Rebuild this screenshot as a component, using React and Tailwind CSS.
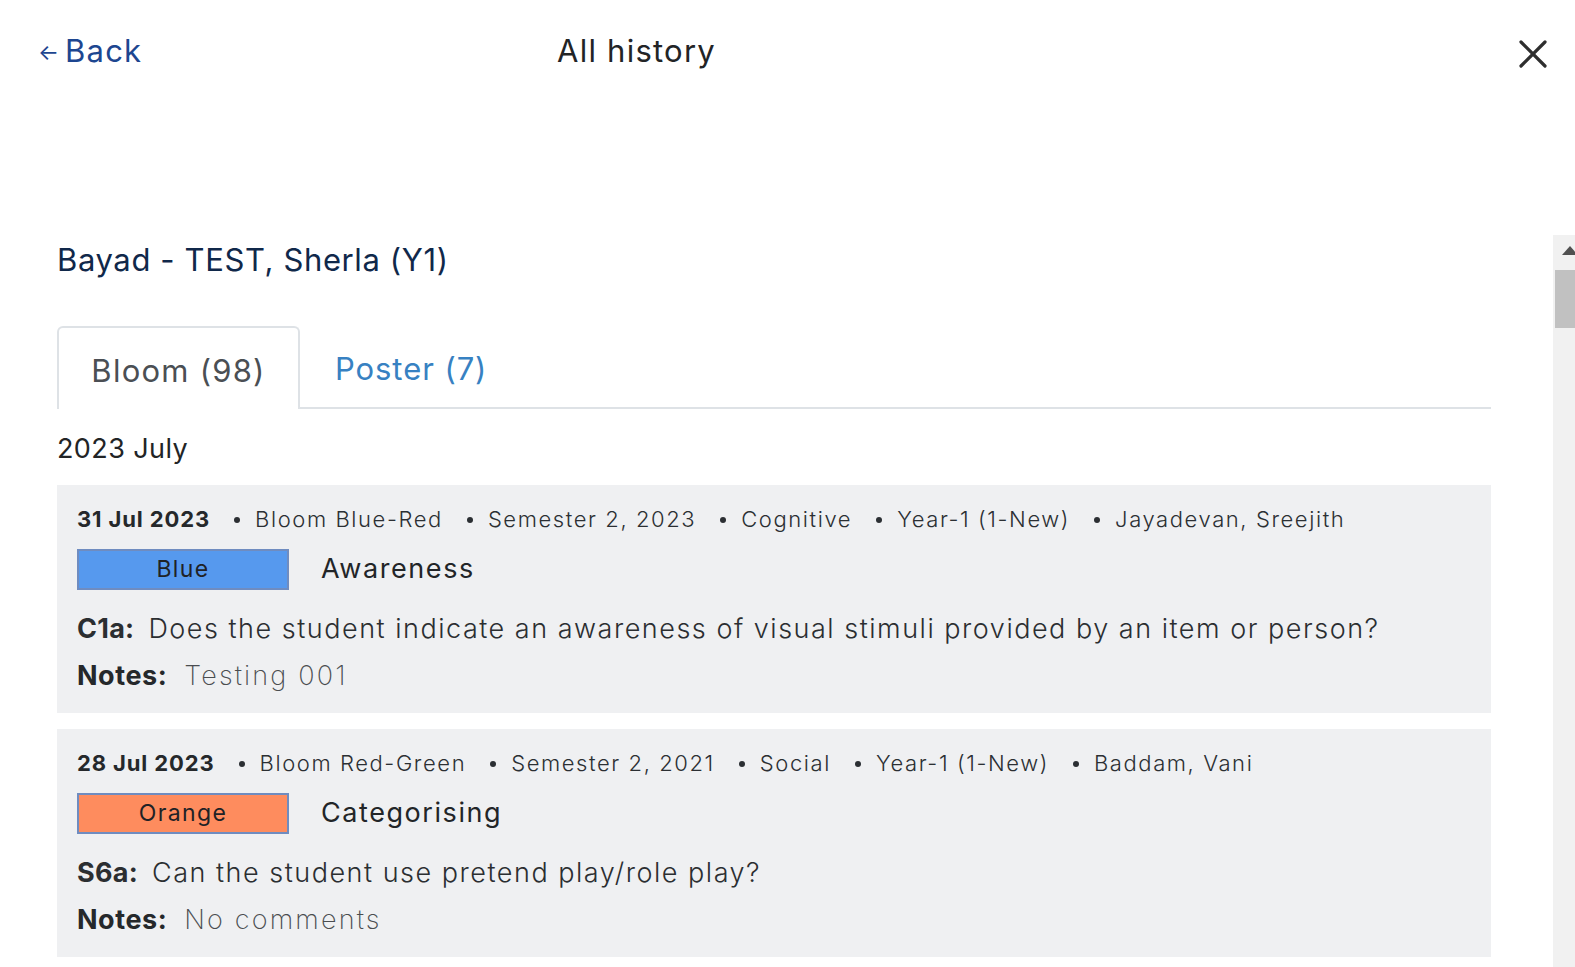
import React from "react";

const cards = [
  {
    date: "31 Jul 2023",
    meta: ["Bloom Blue-Red", "Semester 2, 2023", "Cognitive", "Year-1 (1-New)", "Jayadevan, Sreejith"],
    badge: "Blue",
    badgeClass: "bg-[#5699ee]",
    title: "Awareness",
    code: "C1a:",
    question: "Does the student indicate an awareness of visual stimuli provided by an item or person?",
    notes: "Testing 001",
  },
  {
    date: "28 Jul 2023",
    meta: ["Bloom Red-Green", "Semester 2, 2021", "Social", "Year-1 (1-New)", "Baddam, Vani"],
    badge: "Orange",
    badgeClass: "bg-[#fe8c5e]",
    title: "Categorising",
    code: "S6a:",
    question: "Can the student use pretend play/role play?",
    notes: "No comments",
  },
];

function Card({ c }) {
  return (
    <div className="bg-[#eff0f2] pl-[20px] pr-[20px] pt-[20px] pb-[21px]">
      <div className="flex items-center h-[28px] text-[22px] leading-[28px] text-[#2b2f33] whitespace-nowrap">
        <span className="font-bold text-[#25282b] tracking-[0.04em]">{c.date}</span>
        {c.meta.map((m, i) => (
          <React.Fragment key={i}>
            <span className="ml-[24px] mr-[15px] w-[6px] h-[6px] rounded-full bg-[#2b2f33] mt-[2px]" />
            <span className="font-light tracking-[0.072em]">{m}</span>
          </React.Fragment>
        ))}
      </div>
      <div className="flex items-center mt-[16px] h-[41px]">
        <div className={`w-[212px] h-[41px] ${c.badgeClass} border-2 border-[#6f8cc0] flex items-center justify-center text-[23px] tracking-[0.06em] text-[#1f2226]`}>
          {c.badge}
        </div>
        <div className="ml-[32px] text-[27px] tracking-[0.058em] text-[#222528]">{c.title}</div>
      </div>
      <div className="mt-[23px] h-[32px] flex items-center text-[27px] leading-[32px] text-[#2b2e31] whitespace-nowrap">
        <span className="font-bold tracking-[0.01em]">{c.code}</span>
        <span className="ml-[14px] font-light tracking-[0.056em]">{c.question}</span>
      </div>
      <div className="mt-[15px] h-[32px] flex items-center text-[27px] leading-[32px] whitespace-nowrap">
        <span className="font-bold text-[#25282b] tracking-[0.02em]">Notes:</span>
        <span className="ml-[17px] font-extralight text-[#4a4d50] tracking-[0.08em]">{c.notes}</span>
      </div>
    </div>
  );
}

export default function App() {
  return (
    <div className="w-[1575px] h-[967px] bg-white overflow-hidden flex flex-col font-[Inter,sans-serif]">
      {/* Header */}
      <div className="h-[235px] flex items-start">
        <div className="flex items-center h-[42px] mt-[30px] w-full">
          <div className="w-[557px] pl-[38px] flex items-center text-[#1d4690]">
            <span className="text-[22px] leading-none mr-[6px] mt-[2px]">←</span>
            <span className="text-[31px] leading-[42px] tracking-[0.04em]">Back</span>
          </div>
          <div className="text-[31px] leading-[42px] text-[#222426] tracking-[0.04em]">All history</div>
          <div className="ml-auto mr-[28px] mt-[6px] w-[28px] h-[28px]">
            <svg width="28" height="28" viewBox="0 0 28 28">
              <path d="M2 2 L26 26 M26 2 L2 26" stroke="#2e2e2e" strokeWidth="3.2" strokeLinecap="round" />
            </svg>
          </div>
        </div>
      </div>

      {/* Body */}
      <div className="flex-1 flex min-h-0">
        <div className="w-[1491px] pl-[57px] flex flex-col overflow-hidden">
          <div className="pt-[7px] text-[31px] leading-[36px] text-[#10284a] tracking-[0.02em]">Bayad - TEST, Sherla (Y1)</div>
          <div className="mt-[48px] flex border-b-2 border-[#dee2e6] h-[83px]">
            <div className="-mb-[2px] h-[83px] w-[243px] pt-[5px] border-2 border-b-0 border-[#dee2e6] rounded-t-[6px] bg-white flex items-center justify-center text-[31px] text-[#4b4f54] tracking-[0.04em]">
              Bloom (98)
            </div>
            <div className="h-[81px] pt-[6px] pl-[35px] pr-[34px] flex items-center text-[31px] text-[#3781c2] tracking-[0.03em]">Poster (7)</div>
          </div>
          <div className="mt-[24px] text-[27px] leading-[32px] text-[#222426] tracking-[0.015em]">2023 July</div>
          <div className="mt-[20px] flex flex-col gap-[16px]">
            {cards.map((c, i) => (
              <Card key={i} c={c} />
            ))}
          </div>
        </div>
        <div className="flex-1" />
        {/* Scrollbar */}
        <div className="w-[22px] bg-[#f1f1f1] relative overflow-hidden flex flex-col">
          <div className="h-[35px] relative">
            <svg className="absolute left-[9px] top-[11px]" width="16" height="9" viewBox="0 0 16 9">
              <path d="M0 9 L8 0 L16 9 Z" fill="#505050" />
            </svg>
          </div>
          <div className="ml-[2px] h-[58px] bg-[#c1c1c1]" />
        </div>
      </div>
    </div>
  );
}
